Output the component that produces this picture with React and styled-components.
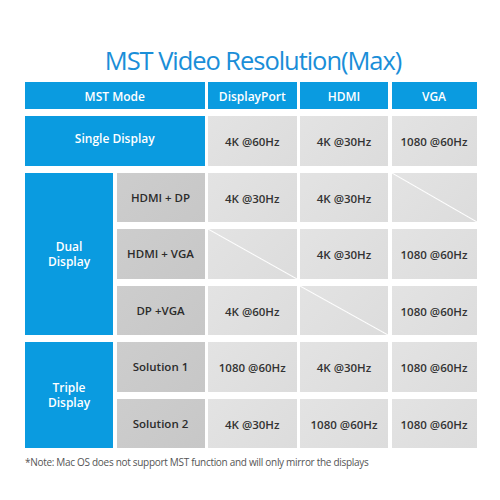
import React from 'react'
import styled, { createGlobalStyle } from 'styled-components'

const GlobalStyle = createGlobalStyle`
  html, body {
    margin: 0;
    padding: 0;
    background: #ffffff;
  }
  body {
    font-family: 'Open Sans', 'Liberation Sans', sans-serif;
  }
`

const rows = [
  { group: 'Single Display', cells: ['4K @60Hz', '4K @30Hz', '1080 @60Hz'] },
  { group: 'Dual\nDisplay', span: 3, sub: 'HDMI + DP', cells: ['4K @30Hz', '4K @30Hz', null] },
  { sub: 'HDMI + VGA', cells: [null, '4K @30Hz', '1080 @60Hz'] },
  { sub: 'DP +VGA', cells: ['4K @60Hz', null, '1080 @60Hz'] },
  { group: 'Triple\nDisplay', span: 2, sub: 'Solution 1', cells: ['1080 @60Hz', '4K @30Hz', '1080 @60Hz'] },
  { sub: 'Solution 2', cells: ['4K @30Hz', '1080 @60Hz', '1080 @60Hz'] },
]

function App() {
  return (
    <Page>
      <GlobalStyle />
      <Title>MST Video Resolution(Max)</Title>
      <Table>
        <HeadCell $wide>MST Mode</HeadCell>
        <HeadCell>DisplayPort</HeadCell>
        <HeadCell>HDMI</HeadCell>
        <HeadCell>VGA</HeadCell>

        {rows.map((r, i) => (
          <React.Fragment key={i}>
            {r.group && (
              <GroupCell $wide={!r.sub} $span={r.span || 1}>
                {r.group}
              </GroupCell>
            )}
            {r.sub && <SubCell>{r.sub}</SubCell>}
            {r.cells.map((c, j) =>
              c ? <DataCell key={j}>{c}</DataCell> : <EmptyCell key={j} />
            )}
          </React.Fragment>
        ))}
      </Table>
      <Note>*Note: Mac OS does not support MST function and will only mirror the displays</Note>
    </Page>
  )
}

const Page = styled.div`
  width: 500px;
  height: 500px;
  box-sizing: border-box;
  padding-top: 43px;
  background: #ffffff;
`

const Title = styled.h1`
  margin: 0 0 5px 0;
  padding-left: 6px;
  text-align: center;
  font-family: 'Open Sans', 'Liberation Sans', sans-serif;
  font-weight: 400;
  font-size: 25.5px;
  line-height: 34px;
  letter-spacing: -1.05px;
  color: #1a8ed8;
`

const Table = styled.div`
  display: grid;
  grid-template-columns: 88px 88px 88.5px 88px 85px;
  grid-template-rows: 27px repeat(6, 49.5px);
  column-gap: 3.5px;
  row-gap: 7px;
  margin-left: 25px;
`

const Cell = styled.div`
  display: flex;
  align-items: center;
  justify-content: center;
  text-align: center;
  font-family: 'Open Sans', 'Liberation Sans', sans-serif;
  font-weight: 600;
  font-size: 11.5px;
`

const HeadCell = styled(Cell)`
  grid-column: ${(p) => (p.$wide ? 'span 2' : 'span 1')};
  background: #0a9be0;
  color: #ffffff;
  font-size: 12px;
  padding-top: 2px;
`

const GroupCell = styled(Cell)`
  grid-column: ${(p) => (p.$wide ? 'span 2' : 'span 1')};
  grid-row: span ${(p) => p.$span};
  background: #0a9be0;
  color: #ffffff;
  font-size: 12px;
  line-height: 15px;
  white-space: pre-line;
  padding-bottom: ${(p) => (p.$wide ? '4px' : '0')};
`

const SubCell = styled(Cell)`
  background: linear-gradient(135deg, #cdcdcd 0%, #c7c7c7 100%);
  color: #2b2b2b;
`

const DataCell = styled(Cell)`
  background: linear-gradient(135deg, #e3e3e3 0%, #dcdcdc 100%);
  color: #333333;
  padding-top: 2px;
`

const EmptyCell = styled.div`
  background:
    linear-gradient(
      to top right,
      transparent calc(50% - 1px),
      #ffffff 50%,
      transparent calc(50% + 1px)
    ),
    linear-gradient(135deg, #e3e3e3 0%, #dcdcdc 100%);
`

const Note = styled.p`
  margin: 7px 0 0 25px;
  font-family: 'Open Sans', 'Liberation Sans', sans-serif;
  font-weight: 400;
  font-size: 10px;
  letter-spacing: -0.3px;
  color: #555555;
`

export default App
